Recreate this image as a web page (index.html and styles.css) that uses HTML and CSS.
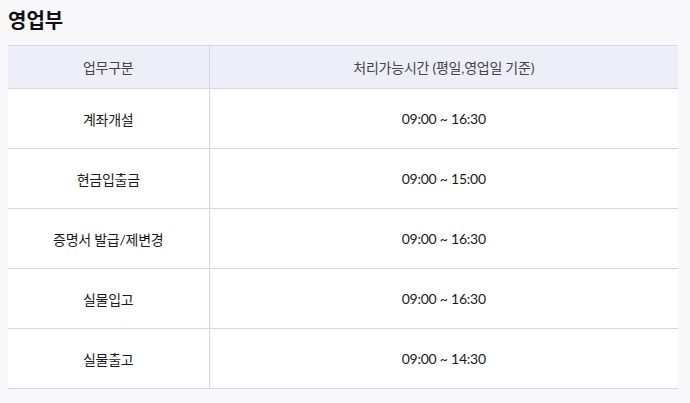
FILE: index.html
```html
<!DOCTYPE html>
<html lang="ko">
<head>
  <meta charset="UTF-8" />
  <title>영업부</title>
  <link rel="stylesheet" href="styles.css">
</head>
<body>
  <h2 class="title">영업부</h2>
  <table class="hours">
    <thead>
      <tr>
        <th class="col-task">업무구분</th>
        <th>처리가능시간 (평일,영업일 기준)</th>
      </tr>
    </thead>
    <tbody>
      <tr><td class="col-task">계좌개설</td><td>09:00 ~ 16:30</td></tr>
      <tr><td class="col-task">현금입출금</td><td>09:00 ~ 15:00</td></tr>
      <tr><td class="col-task">증명서 발급/제변경</td><td>09:00 ~ 16:30</td></tr>
      <tr><td class="col-task">실물입고</td><td>09:00 ~ 16:30</td></tr>
      <tr><td class="col-task">실물출고</td><td>09:00 ~ 14:30</td></tr>
    </tbody>
  </table>
</body>
</html>
```

FILE: styles.css
```css
* {
  box-sizing: border-box;
}

body {
  margin: 0;
  padding: 8px;
  background: #f8f8fb;
  font-family: Lato, 'Noto Sans CJK KR', sans-serif;
  color: #222;
}

.title {
  margin: 0 0 13px;
  font-size: 20px;
  line-height: 24px;
  font-weight: 700;
  color: #111;
}

.hours {
  width: 670px;
  border-collapse: collapse;
  border-top: 1px solid #d6d3ef;
  background: #fff;
}

.hours th,
.hours td {
  text-align: center;
  border-bottom: 1px solid #d6d3ef;
  font-size: 14px;
  letter-spacing: -0.25px;
}

.hours th {
  height: 43px;
  background: #eeeef8;
  font-weight: 400;
  color: #444;
}

.hours td {
  height: 60px;
  color: #1a1a1a;
}

.col-task {
  width: 201px;
  border-right: 1px solid #d6d3ef;
}
```
